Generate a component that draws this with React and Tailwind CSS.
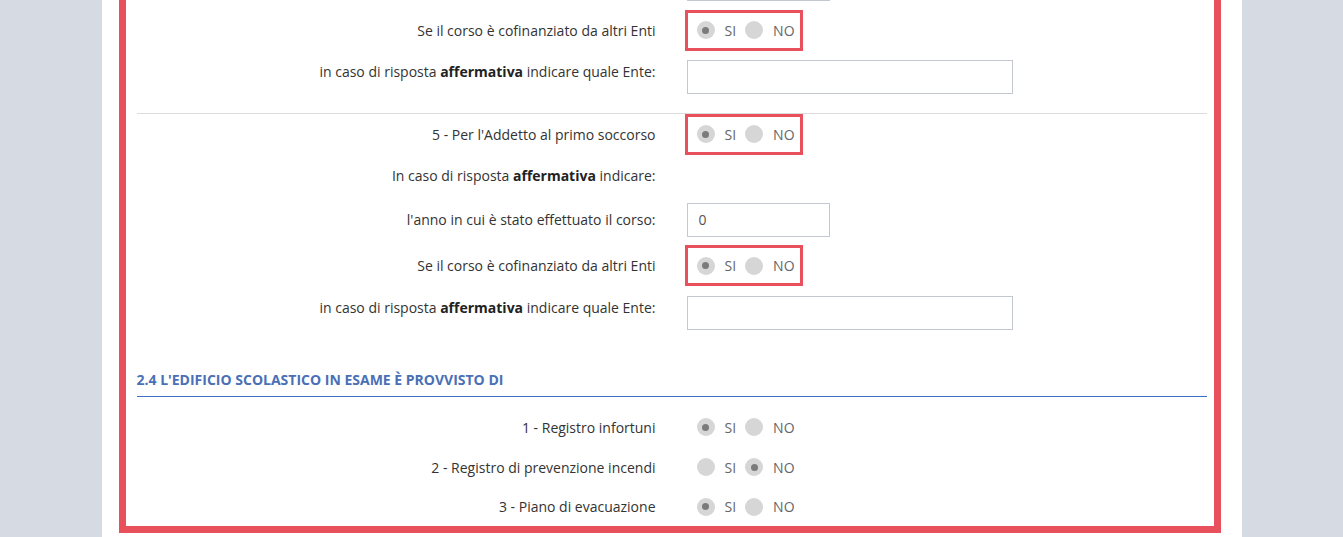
import React from 'react';

const font = { fontFamily: '"Open Sans", "Liberation Sans", sans-serif' };

const Radio = ({ checked }) => (
  <span className="w-[18px] h-[18px] rounded-full bg-[#d6d6d6] flex items-center justify-center shrink-0">
    {checked && <span className="w-[7px] h-[7px] rounded-full bg-[#7b7b7b]" />}
  </span>
);

const YesNo = ({ value = 'si', highlight }) => (
  <div
    className={`inline-flex items-center h-[41px] w-[118px] pl-[9px] ml-[-2px] border-[3px] text-[14px] text-[#666] ${
      highlight ? 'border-[#e8505b]' : 'border-transparent'
    }`}
  >
    <Radio checked={value === 'si'} />
    <span className="ml-[10px]">SI</span>
    <span className="ml-[9px]">
      <Radio checked={value === 'no'} />
    </span>
    <span className="ml-[10px]">NO</span>
  </div>
);

const Row = ({ label, h, raise, children }) => (
  <div className="flex items-center" style={{ height: h }}>
    <div className={`w-[519px] text-right text-[14px] text-[#333] shrink-0 ${raise ? 'mb-[11px]' : ''}`}>
      {label}
    </div>
    <div className="ml-[31px] flex items-center">{children}</div>
  </div>
);

const TextInput = ({ w = 'w-[326px]', value }) => (
  <div className={`${w} h-[34px] border border-[#c3c8d0] bg-white flex items-center px-[11px] text-[14px] text-[#555]`}>
    {value}
  </div>
);

const Affermativa = ({ tail }) => (
  <span>
    in caso di risposta <b className="font-bold text-[#222]">affermativa</b> {tail}
  </span>
);

export default function App() {
  return (
    <div className="h-[537px] overflow-hidden bg-[#d5dae3]" style={font}>
      <div className="mx-auto w-[1140px] h-[537px] bg-white flex flex-col">
        <div className="ml-[17px] w-[1102px] mt-[-46px] border-[7px] border-[#e8505b] pl-[11px] pr-[7px] shrink-0">
          <Row label="" h={46}>
            <TextInput w="w-[143px]" value="" />
          </Row>
          <Row label="Se il corso è cofinanziato da altri Enti" h={46}>
            <YesNo highlight />
          </Row>
          <Row label={<Affermativa tail="indicare quale Ente:" />} h={47} raise>
            <TextInput />
          </Row>
          <div className="h-[13px]" />
          <div className="h-px bg-[#dcdcdc]" />
          <Row label="5 - Per l'Addetto al primo soccorso" h={40}>
            <YesNo highlight />
          </Row>
          <Row
            label={
              <span>
                In caso di risposta <b className="font-bold text-[#222]">affermativa</b> indicare:
              </span>
            }
            h={42}
          />
          <Row label="l'anno in cui è stato effettuato il corso:" h={47}>
            <TextInput w="w-[143px]" value="0" />
          </Row>
          <Row label="Se il corso è cofinanziato da altri Enti" h={45}>
            <YesNo highlight />
          </Row>
          <Row label={<Affermativa tail="indicare quale Ente:" />} h={49} raise>
            <TextInput />
          </Row>
          <div className="h-[59px] flex items-end pb-[6px]">
            <h3 className="text-[14px] font-bold text-[#4a70b6]">
              2.4 L'EDIFICIO SCOLASTICO IN ESAME È PROVVISTO DI
            </h3>
          </div>
          <div className="h-px bg-[#3f6fbf]" />
          <div className="h-[10px]" />
          <Row label="1 - Registro infortuni" h={40}>
            <YesNo value="si" />
          </Row>
          <Row label="2 - Registro di prevenzione incendi" h={40}>
            <YesNo value="no" />
          </Row>
          <Row label="3 - Piano di evacuazione" h={39}>
            <YesNo value="si" />
          </Row>
        </div>
      </div>
    </div>
  );
}
